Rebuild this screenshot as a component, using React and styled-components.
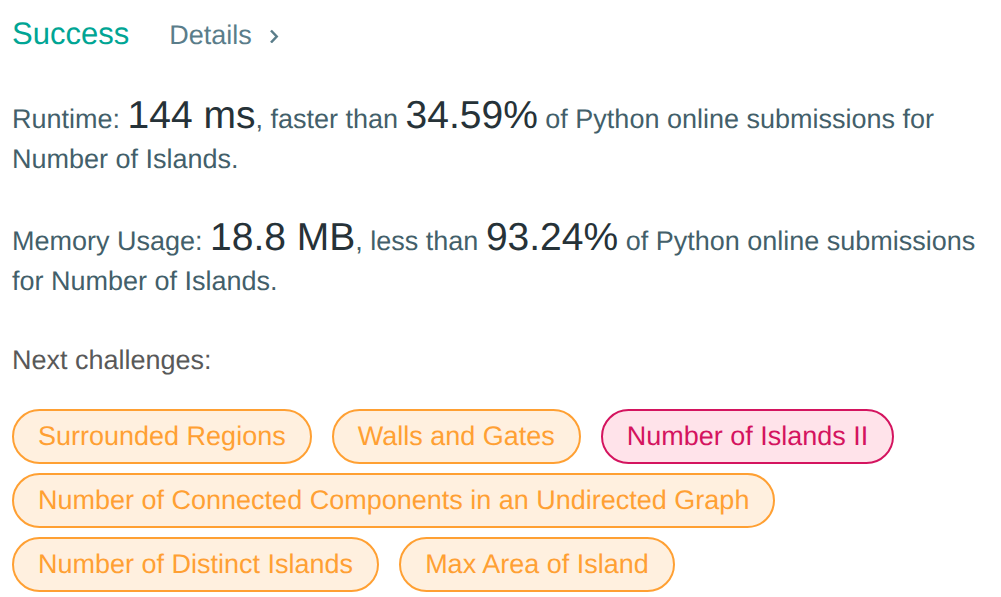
import React from "react";
import styled, { createGlobalStyle } from "styled-components";

const GlobalStyle = createGlobalStyle`
  *, *::before, *::after { box-sizing: border-box; }
  body {
    margin: 0;
    background: #ffffff;
    color: #435f6a;
    font-family: "Liberation Sans", Arial, sans-serif;
    font-size: 27px;
    line-height: 40px;
    text-rendering: geometricPrecision;
  }
`;

const Page = styled.main`
  padding: 14px 12px 4px;
`;

const Header = styled.header`
  display: flex;
  align-items: baseline;
  gap: 40px;
`;

const Status = styled.h1`
  margin: 0;
  color: #00a594;
  font-size: 31px;
  font-weight: 400;
  line-height: 40px;
`;

const DetailsLink = styled.a`
  display: inline-flex;
  align-items: center;
  gap: 17px;
  color: #5a7d8a;
  text-decoration: none;
`;

const Stats = styled.section`
  display: flex;
  flex-direction: column;
  gap: 39px;
  margin-top: 41px;
`;

const Stat = styled.p`
  margin: 0;
`;

const Figure = styled.span`
  color: #263238;
  font-size: 39px;
`;

const ListTitle = styled.h2`
  margin: 39px 0 0;
  color: #595959;
  font-size: 27px;
  font-weight: 400;
  line-height: 40px;
`;

const Challenges = styled.nav`
  display: flex;
  flex-wrap: wrap;
  gap: 9px 20px;
  margin-top: 29px;
`;

const Challenge = styled.a`
  padding: 0 24px;
  border: 2px solid currentColor;
  border-radius: 28px;
  background: ${(p) => (p.$hard ? "#ffe3ea" : "#fff0df")};
  color: ${(p) => (p.$hard ? "#d4145f" : "#ffa033")};
  line-height: 51px;
  text-decoration: none;
`;

const challenges = [
  { title: "Surrounded Regions" },
  { title: "Walls and Gates" },
  { title: "Number of Islands II", hard: true },
  { title: "Number of Connected Components in an Undirected Graph" },
  { title: "Number of Distinct Islands" },
  { title: "Max Area of Island" },
];

function Chevron() {
  return (
    <svg width="10" height="16" viewBox="0 0 10 16" fill="none" aria-hidden="true">
      <path d="M2 3.5l5.7 6-5.7 6" stroke="currentColor" strokeWidth="2.5" />
    </svg>
  );
}

export default function App() {
  return (
    <>
      <GlobalStyle />
      <Page>
        <Header>
          <Status>Success</Status>
          <DetailsLink href="#details">
            Details
            <Chevron />
          </DetailsLink>
        </Header>
        <Stats>
          <Stat>
            Runtime: <Figure>144 ms</Figure>, faster than <Figure>34.59%</Figure> of
            Python online submissions for Number of Islands.
          </Stat>
          <Stat>
            Memory Usage: <Figure>18.8 MB</Figure>, less than <Figure>93.24%</Figure> of
            Python online submissions for Number of Islands.
          </Stat>
        </Stats>
        <ListTitle>Next challenges:</ListTitle>
        <Challenges aria-label="Next challenges">
          {challenges.map((c) => (
            <Challenge key={c.title} href="#challenge" $hard={c.hard}>
              {c.title}
            </Challenge>
          ))}
        </Challenges>
      </Page>
    </>
  );
}
